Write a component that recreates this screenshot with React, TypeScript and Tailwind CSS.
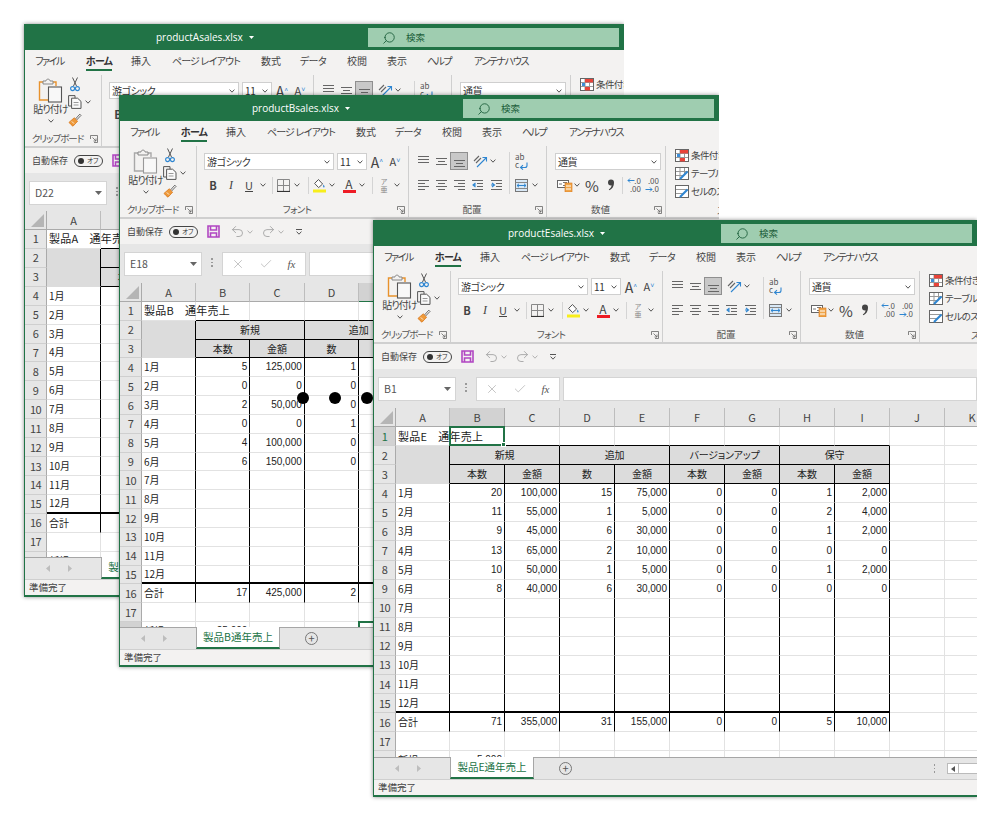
import { Check, Redo2, Search, Undo2, X } from "lucide-react";

const COLS = ["A", "B", "C", "D", "E", "F", "G", "H", "I", "J", "K"];
const MONTHS = ["1月", "2月", "3月", "4月", "5月", "6月", "7月", "8月", "9月", "10月", "11月", "12月"];
const HEAD_TOP = ["新規", "追加", "バージョンアップ", "保守"];
const HEAD_SUB = ["本数", "金額", "数", "金額", "本数", "金額", "本数", "金額"];

const TABS = [
  { label: "ファイル", cls: "w-[49px] tracking-[-1.5px]" },
  { label: "ホーム", cls: "w-[50px] tracking-[-0.7px]", active: true },
  { label: "挿入", cls: "w-[34px]" },
  { label: "ページ レイアウト", cls: "w-[96px] tracking-[-0.8px]" },
  { label: "数式", cls: "w-[34px]" },
  { label: "データ", cls: "w-[50px] tracking-[-0.5px]" },
  { label: "校閲", cls: "w-[38px]" },
  { label: "表示", cls: "w-[42px]" },
  { label: "ヘルプ", cls: "w-[42px] tracking-[-1.5px]" },
  { label: "アンテナハウス", cls: "w-[82px] tracking-[-1.4px]" },
];

type Book = {
  file: string;
  name: string;
  product: string;
  cell: string;
  pasteOn: boolean;
  windowCls: string;
  titleCls: string;
  formulaCls: string;
  gridCls: string;
  data: string[][];
  total: string[];
  extra: string;
  selCol?: number;
  selRow?: number;
};

const BOOKS: Book[] = [
  {
    file: "productAsales.xlsx",
    name: "製品A通年売上",
    product: "製品A　通年売上",
    cell: "D22",
    pasteOn: true,
    windowCls: "left-[24px] top-[24px] h-[573px] w-[600px] z-0",
    titleCls: "ml-[131px]",
    formulaCls: "h-[38px]",
    gridCls: "grid-cols-[22px_54px_repeat(10,54.4px)] auto-rows-[18.93px]",
    data: [["3", "15,000"], ["2", "10,000"], ["1", "5,000"], ["0", "0"], ["2", "10,000"], ["1", "5,000"]],
    total: ["9", "45,000"],
    extra: "5,000",
  },
  {
    file: "productBsales.xlsx",
    name: "製品B通年売上",
    product: "製品B　通年売上",
    cell: "E18",
    pasteOn: false,
    windowCls: "left-[119px] top-[95px] h-[572px] w-[600px] z-10",
    titleCls: "ml-[132px]",
    formulaCls: "h-[39px]",
    gridCls: "grid-cols-[22px_54px_repeat(10,54.4px)] auto-rows-[18.83px]",
    data: [
      ["5", "125,000", "1", "5,000"],
      ["0", "0", "0", "0"],
      ["2", "50,000", "0", "0"],
      ["0", "0", "1", "5,000"],
      ["4", "100,000", "0", "0"],
      ["6", "150,000", "0", "0"],
    ],
    total: ["17", "425,000", "2", "10,000"],
    extra: "25,000",
    selCol: 4,
    selRow: 18,
  },
  {
    file: "productEsales.xlsx",
    name: "製品E通年売上",
    product: "製品E　通年売上",
    cell: "B1",
    pasteOn: true,
    windowCls: "left-[373px] top-[220px] h-[577px] w-[604px] z-30",
    titleCls: "ml-[134px]",
    formulaCls: "h-[39px]",
    gridCls: "grid-cols-[22px_54px_repeat(10,55px)] auto-rows-[19.09px]",
    data: [
      ["20", "100,000", "15", "75,000", "0", "0", "1", "2,000"],
      ["11", "55,000", "1", "5,000", "0", "0", "2", "4,000"],
      ["9", "45,000", "6", "30,000", "0", "0", "1", "2,000"],
      ["13", "65,000", "2", "10,000", "0", "0", "0", "0"],
      ["10", "50,000", "1", "5,000", "0", "0", "1", "2,000"],
      ["8", "40,000", "6", "30,000", "0", "0", "0", "0"],
    ],
    total: ["71", "355,000", "31", "155,000", "0", "0", "5", "10,000"],
    extra: "5,000",
    selCol: 1,
    selRow: 1,
  },
];

function Caret({ cls = "" }: { cls?: string }) {
  return (
    <svg width="6" height="4" viewBox="0 0 6 4" className={`shrink-0 ${cls}`}>
      <path d="M.6.6 3 3.2 5.4.6" fill="none" stroke="#555" strokeWidth="1" />
    </svg>
  );
}

function Launcher() {
  return (
    <svg width="8" height="8" viewBox="0 0 8 8" className="shrink-0">
      <path d="M.5 4V.5H7.5V7.5H4M2.5 2.5 6 6M6 3.5V6H3.5" fill="none" stroke="#666" strokeWidth=".8" />
    </svg>
  );
}

function PasteIcon({ on }: { on: boolean }) {
  const board = on ? "#e8922c" : "#a8a8a8";
  return (
    <svg width="25" height="25" viewBox="0 0 25 25">
      <path d="M5 4H1.5V22H10" fill="none" stroke={board} strokeWidth="1.4" />
      <path d="M15 4H18V8" fill="none" stroke={board} strokeWidth="1.4" />
      <path d="M5 3H8C8 .5 12 .5 12 3H15V6H5Z" fill="#f3f2f1" stroke="#888" strokeWidth="1" />
      <rect x="10.5" y="9" width="13" height="15" fill="#f8f8f8" stroke={on ? "#555" : "#999"} strokeWidth="1.1" />
    </svg>
  );
}

function ScissorsIcon() {
  return (
    <svg width="10" height="15" viewBox="0 0 10 15">
      <path d="M2.5.5 6.5 9M7.5.5 3.5 9" fill="none" stroke="#555" strokeWidth="1" />
      <circle cx="2.6" cy="11.6" r="2" fill="none" stroke="#2f86d1" strokeWidth="1.1" />
      <circle cx="7.4" cy="11.6" r="2" fill="none" stroke="#2f86d1" strokeWidth="1.1" />
    </svg>
  );
}

function CopyIcon() {
  return (
    <svg width="14" height="14" viewBox="0 0 14 14">
      <path d="M3.5 11H.6V.6H7V3" fill="none" stroke="#555" strokeWidth="1" />
      <path d="M3.6 3.2H9.6L13 6.4V13.4H3.6Z" fill="#fafafa" stroke="#555" strokeWidth="1" />
      <path d="M5.6 7.5H10.5M5.6 10H10.5" stroke="#999" strokeWidth="1" />
    </svg>
  );
}

function BrushIcon() {
  return (
    <svg width="14" height="14" viewBox="0 0 14 14">
      <path d="M7.5 6 11.8 1.2 13 2.4 8.6 7" fill="#fff" stroke="#555" strokeWidth=".9" />
      <path d="M1 9.4 6.2 4.8 9.6 8.2 5 13.2C3.6 12 2 10.8 1 9.4Z" fill="#ee9a3a" stroke="#d9761a" strokeWidth=".8" />
      <path d="M3.8 8.4 6 10.6" stroke="#fff" strokeWidth=".8" />
    </svg>
  );
}

function BordersIcon() {
  return (
    <svg width="13" height="13" viewBox="0 0 13 13">
      <path d="M.5.5H12.5V12.5H.5ZM6.5.5V12.5M.5 6.5H12.5" fill="none" stroke="#888" strokeWidth="1" />
      <path d="M0 12.5H13" stroke="#333" strokeWidth="1.2" />
    </svg>
  );
}

function FillIcon() {
  return (
    <svg width="13" height="15" viewBox="0 0 13 15">
      <path d="M5.5 1.5 9.6 6 5.6 9.6 1.6 5.4Z" fill="#fff" stroke="#555" strokeWidth="1" />
      <path d="M10.5 6.5C11.5 8 12 8.5 11.2 9.4 10.4 9.8 9.6 9 10.5 6.5Z" fill="#2f86d1" />
      <rect y="11.5" width="13" height="3" fill="#f7ee1c" />
    </svg>
  );
}

function FontColorIcon() {
  return (
    <div className="flex w-[13px] flex-col items-center leading-none">
      <span className="h-[11px] text-[12px] leading-[11px] text-[#444]">A</span>
      <span className="mt-[1px] h-[3px] w-[13px] bg-[#ee1c25]" />
    </div>
  );
}

function AlignIcon({ kind }: { kind: string }) {
  const paths: Record<string, string> = {
    top: "M1 1.5H12M1 4.5H12M1 7.5H12",
    middle: "M1 3.5H12M3 6.5H10M1 9.5H12",
    bottom: "M1 5.5H12M3 8.5H10M1 11.5H12",
    left: "M1 1.5H12M1 4.5H8M1 7.5H12M1 10.5H8",
    center: "M1 1.5H12M3 4.5H10M1 7.5H12M3 10.5H10",
    right: "M1 1.5H12M5 4.5H12M1 7.5H12M5 10.5H12",
    outdent: "M1 1.5H12M6 4.5H12M6 7.5H12M1 10.5H12",
    indent: "M1 1.5H12M6 4.5H12M6 7.5H12M1 10.5H12",
  };
  return (
    <svg width="13" height="13" viewBox="0 0 13 13">
      <path d={paths[kind]} fill="none" stroke="#666" strokeWidth="1" />
      {kind === "outdent" && <path d="M4.5 4 2 6l2.5 2M2 6H5" fill="none" stroke="#2f86d1" strokeWidth="1.1" />}
      {kind === "indent" && <path d="M2 4l2.5 2L2 8M4.5 6H1" fill="none" stroke="#2f86d1" strokeWidth="1.1" />}
    </svg>
  );
}

function OrientIcon() {
  return (
    <svg width="15" height="13" viewBox="0 0 15 13">
      <path d="M1 6 6 1M3 8 8 3" fill="none" stroke="#666" strokeWidth="1.1" />
      <path d="M4 12 13 3M9.5 2.5H13.5V6.5" fill="none" stroke="#2f86d1" strokeWidth="1.1" />
    </svg>
  );
}

function WrapIcon() {
  return (
    <div className="relative flex h-[17px] w-[13px] flex-col text-[8px] leading-[8px] text-[#555]">
      <span>ab</span>
      <span>c</span>
      <svg width="9" height="8" viewBox="0 0 9 8" className="absolute right-0 bottom-0">
        <path d="M8 .5V3.5C8 5 7 5.5 6 5.5H2M4 3.2 1.5 5.5 4 7.6" fill="none" stroke="#2f86d1" strokeWidth="1.1" />
      </svg>
    </div>
  );
}

function MergeIcon() {
  return (
    <svg width="13" height="13" viewBox="0 0 13 13">
      <rect x=".5" y=".5" width="12" height="12" fill="#d8e8f6" stroke="#777" />
      <path d="M.5 3.5H12.5M.5 9.5H12.5" stroke="#888" />
      <path d="M2 6.5H11M4 4.8 2 6.5 4 8.2M9 4.8 11 6.5 9 8.2" fill="none" stroke="#2f86d1" strokeWidth="1" />
    </svg>
  );
}

function CurrencyIcon() {
  return (
    <svg width="16" height="13" viewBox="0 0 16 13">
      <rect x=".5" y="1.5" width="11" height="7" fill="#fff" stroke="#666" />
      <path d="M2 5H5M6 3.5H10M6 6.5H10" stroke="#777" />
      <rect x="8" y="4" width="7" height="9" fill="#f0a64b" stroke="#d9761a" strokeWidth=".6" />
      <path d="M9 7H14M9 10H14" stroke="#fff" />
    </svg>
  );
}

function CommaIcon() {
  return (
    <svg width="8" height="12" viewBox="0 0 8 12">
      <circle cx="4" cy="3.6" r="3" fill="#444" />
      <path d="M6.8 4C7 7.4 5.2 10 2.4 11.2L1.8 10.4C3.6 9.2 4.6 7.8 4.6 6Z" fill="#444" />
    </svg>
  );
}

function DecimalIcon({ up }: { up: boolean }) {
  return (
    <div className="relative h-[16px] w-[14px] text-[8px] leading-[8px] text-[#555]">
      <span className="absolute top-0 right-0">{up ? ".0" : ".00"}</span>
      <span className="absolute right-0 bottom-0">{up ? ".00" : ".0"}</span>
      <svg width="8" height="5" viewBox="0 0 8 5" className={up ? "absolute top-[1px] left-0" : "absolute bottom-[1px] left-0"}>
        {up ? (
          <path d="M7.5 2.5H1M3 .5 1 2.5 3 4.5" fill="none" stroke="#2f86d1" strokeWidth="1" />
        ) : (
          <path d="M.5 2.5H7M5 .5 7 2.5 5 4.5" fill="none" stroke="#2f86d1" strokeWidth="1" />
        )}
      </svg>
    </div>
  );
}

function StyleIcon({ kind }: { kind: number }) {
  return (
    <svg width="14" height="13" viewBox="0 0 14 13" className="shrink-0">
      <rect x=".5" y=".5" width="13" height="12" fill="#fff" stroke="#666" />
      {kind === 0 && (
        <>
          <path d="M1 4.5H13M1 8.5H13M5 1V12M9.5 1V12" stroke="#999" />
          <rect x="5" y="1" width="8" height="3.4" fill="#e8443a" />
          <rect x="2" y="5" width="3" height="3" fill="#3b8ed8" />
          <rect x="5" y="9" width="5" height="3.4" fill="#e8443a" />
        </>
      )}
      {kind === 1 && <path d="M1 4.5H13M1 8.5H9M5 1V12M9.5 1V8" stroke="#999" />}
      {kind === 2 && <path d="M1 4.5H13M1 8.5H8" stroke="#999" />}
      {kind !== 0 && <path d="M5 12 12.5 4.5" stroke="#2f86d1" strokeWidth="2.2" />}
    </svg>
  );
}

function Combo({ text, cls }: { text: string; cls: string }) {
  return (
    <div className={`flex h-[17px] items-center justify-between border border-[#cfcfcf] bg-white pr-[3px] pl-[2px] text-[10px] tracking-[-0.4px] text-[#333] ${cls}`}>
      <span className="whitespace-nowrap">{text}</span>
      <Caret />
    </div>
  );
}

function Slot({ cls, children }: { cls: string; children: React.ReactNode }) {
  return <div className={`flex shrink-0 items-center justify-center ${cls}`}>{children}</div>;
}

function Divider({ cls }: { cls: string }) {
  return <div className={`h-[17px] w-px shrink-0 bg-[#d4d4d4] ${cls}`} />;
}

function GroupLabel({ text, cls = "" }: { text: string; cls?: string }) {
  return (
    <div className="flex h-[14px] shrink-0 items-center pr-[3px]">
      <span className={`flex-1 whitespace-nowrap text-center text-[9.5px] leading-none text-[#555] ${cls}`}>{text}</span>
      <Launcher />
    </div>
  );
}

function Ribbon({ pasteOn }: { pasteOn: boolean }) {
  return (
    <div className="flex h-[71px] shrink-0 bg-[#f3f2f1]">
      <div className="flex w-[77px] shrink-0 flex-col border-r border-[#cfcfcf]">
        <div className="flex flex-1">
          <div className="flex w-[47px] shrink-0 flex-col items-center pt-[3px] pl-[4px]">
            <PasteIcon on={pasteOn} />
            <span className="whitespace-nowrap text-[10px] leading-[12px] tracking-[-0.9px] text-[#444]">貼り付け</span>
            <Caret cls="mt-[4px]" />
          </div>
          <div className="ml-[-4px] flex flex-col">
            <Slot cls="h-[18px] w-[14px]"><ScissorsIcon /></Slot>
            <div className="flex h-[18px] items-center gap-[3px]"><CopyIcon /><Caret /></div>
            <Slot cls="h-[18px] w-[14px]"><BrushIcon /></Slot>
          </div>
        </div>
        <GroupLabel text="クリップボード" cls="tracking-[-1px]" />
      </div>

      <div className="flex w-[212px] shrink-0 flex-col border-r border-[#cfcfcf] pt-[7px]">
        <div className="flex flex-1 flex-col">
          <div className="flex items-center pl-[7px]">
            <Combo text="游ゴシック" cls="w-[130px]" />
            <Combo text="11" cls="ml-[3px] w-[30px]" />
            <Slot cls="ml-[1px] w-[18px]"><span className="text-[14px] leading-none text-[#444]">A<sup className="text-[7px] text-[#2f86d1]">^</sup></span></Slot>
            <Slot cls="w-[18px]"><span className="text-[11px] leading-none text-[#444]">A<sup className="text-[7px] text-[#2f86d1]">˅</sup></span></Slot>
          </div>
          <div className="mt-[6px] flex h-[18px] items-center pl-[7px] text-[#444]">
            <Slot cls="w-[18px]"><span className="text-[11px] font-bold">B</span></Slot>
            <Slot cls="w-[18px]"><span className="font-['Liberation_Serif'] text-[12px] italic">I</span></Slot>
            <Slot cls="w-[18px]"><span className="text-[11px] underline">U</span></Slot>
            <Slot cls="w-[9px]"><Caret /></Slot>
            <Divider cls="ml-[5px]" />
            <Slot cls="ml-[2px] w-[16px]"><BordersIcon /></Slot>
            <Slot cls="w-[12px]"><Caret /></Slot>
            <Divider cls="ml-[5px]" />
            <Slot cls="ml-[2px] w-[16px]"><FillIcon /></Slot>
            <Slot cls="w-[10px]"><Caret /></Slot>
            <Slot cls="ml-[4px] w-[16px]"><FontColorIcon /></Slot>
            <Slot cls="w-[10px]"><Caret /></Slot>
            <Divider cls="ml-[5px]" />
            <Slot cls="ml-[3px] w-[16px]"><span className="flex flex-col items-center text-[7px] leading-[8px] text-[#888]"><span>ア</span><span>亜</span></span></Slot>
            <Slot cls="w-[10px]"><Caret /></Slot>
          </div>
        </div>
        <GroupLabel text="フォント" cls="tracking-[-0.6px]" />
      </div>

      <div className="flex w-[138px] shrink-0 flex-col border-r border-[#cfcfcf] pt-[6px]">
        <div className="flex flex-1">
          <div className="w-[100px] shrink-0 pl-[5px]">
            <div className="flex h-[18px] items-center">
              <Slot cls="w-[18px]"><AlignIcon kind="top" /></Slot>
              <Slot cls="w-[18px]"><AlignIcon kind="middle" /></Slot>
              <Slot cls="h-[18px] w-[18px] border border-[#8f8f8f] bg-[#c8c8c8]"><AlignIcon kind="bottom" /></Slot>
              <Slot cls="ml-[5px] w-[15px]"><OrientIcon /></Slot>
              <Slot cls="w-[10px]"><Caret /></Slot>
            </div>
            <div className="mt-[6px] flex h-[18px] items-center">
              <Slot cls="w-[18px]"><AlignIcon kind="left" /></Slot>
              <Slot cls="w-[18px]"><AlignIcon kind="center" /></Slot>
              <Slot cls="w-[18px]"><AlignIcon kind="right" /></Slot>
              <Slot cls="w-[19px]"><AlignIcon kind="outdent" /></Slot>
              <Slot cls="w-[19px]"><AlignIcon kind="indent" /></Slot>
            </div>
          </div>
          <div className="h-[42px] w-px shrink-0 bg-[#d4d4d4]" />
          <div className="pl-[5px]">
            <div className="flex h-[18px] items-center"><WrapIcon /></div>
            <div className="mt-[6px] flex h-[18px] items-center gap-[4px]"><MergeIcon /><Caret /></div>
          </div>
        </div>
        <GroupLabel text="配置" />
      </div>

      <div className="flex w-[119px] shrink-0 flex-col border-r border-[#cfcfcf] pt-[7px]">
        <div className="flex flex-1 flex-col">
          <div className="pl-[8px]"><Combo text="通貨" cls="w-[106px]" /></div>
          <div className="mt-[6px] flex h-[18px] items-center pl-[10px] text-[#444]">
            <Slot cls="w-[16px]"><CurrencyIcon /></Slot>
            <Slot cls="ml-[1px] w-[6px]"><Caret /></Slot>
            <Slot cls="ml-[2px] w-[20px]"><span className="text-[15px] leading-none">%</span></Slot>
            <Slot cls="w-[18px]"><CommaIcon /></Slot>
            <Divider cls="ml-[2px]" />
            <Slot cls="ml-[2px] w-[18px]"><DecimalIcon up /></Slot>
            <Slot cls="w-[18px]"><DecimalIcon up={false} /></Slot>
          </div>
        </div>
        <GroupLabel text="数値" />
      </div>

      <div className="flex min-w-0 flex-1 flex-col pl-[9px]">
        <div className="flex flex-1 flex-col text-[9.5px] tracking-[-0.6px] text-[#444]">
          <div className="flex h-[18px] items-center gap-[2px] whitespace-nowrap"><StyleIcon kind={0} />条件付き書式</div>
          <div className="flex h-[18px] items-center gap-[2px] whitespace-nowrap"><StyleIcon kind={1} />テーブルとして書式設定</div>
          <div className="flex h-[18px] items-center gap-[2px] whitespace-nowrap"><StyleIcon kind={2} />セルのスタイル</div>
        </div>
        <div className="h-[14px] pl-[42px] text-[9.5px] leading-[14px] whitespace-nowrap text-[#555]">スタイル</div>
      </div>
    </div>
  );
}

function QuickBar() {
  return (
    <div className="flex h-[25px] shrink-0 items-center bg-[#f3f2f1] pl-[7px] text-[#777]">
      <span className="text-[9px] text-[#444]">自動保存</span>
      <div className="ml-[6px] flex h-[12px] w-[29px] items-center gap-[3px] rounded-full border border-[#444] pl-[3px]">
        <span className="size-[6px] rounded-full bg-[#333]" />
        <span className="text-[6.5px] leading-none text-[#333]">オフ</span>
      </div>
      <svg width="13" height="13" viewBox="0 0 13 13" className="ml-[9px]">
        <path d="M1 1H12V12H1ZM3.5 1V5H9.5V1M3.5 12V8H9.5V12" fill="none" stroke="#b146c2" strokeWidth="1.6" />
      </svg>
      <Undo2 size={15} strokeWidth={1.5} className="ml-[10px] text-[#a6a6a6]" />
      <Caret cls="ml-[2px] opacity-40" />
      <Redo2 size={15} strokeWidth={1.5} className="ml-[8px] text-[#a6a6a6]" />
      <Caret cls="ml-[2px] opacity-40" />
      <div className="ml-[12px] flex flex-col items-center gap-[1px]">
        <span className="h-px w-[6px] bg-[#555]" />
        <Caret />
      </div>
    </div>
  );
}

function FormulaBar({ cell, cls }: { cell: string; cls: string }) {
  return (
    <div className={`flex shrink-0 items-start bg-[#e6e6e6] pt-[8px] pl-[4px] ${cls}`}>
      <div className="flex h-[24px] w-[78px] shrink-0 items-center justify-between border border-[#d4d4d4] bg-white pr-[4px] pl-[5px] text-[10.5px] text-[#555]">
        {cell}
        <svg width="7" height="4" viewBox="0 0 7 4"><path d="M0 0H7L3.5 4Z" fill="#666" /></svg>
      </div>
      <div className="mx-[9px] mt-[6px] flex flex-col gap-[2px]">
        <span className="size-[1.5px] bg-[#999]" />
        <span className="size-[1.5px] bg-[#999]" />
        <span className="size-[1.5px] bg-[#999]" />
      </div>
      <div className="flex h-[24px] w-[84px] shrink-0 items-center border border-[#d4d4d4] bg-white">
        <Slot cls="w-[30px]"><X size={14} strokeWidth={1.5} className="text-[#bdbdbd]" /></Slot>
        <Slot cls="w-[26px]"><Check size={14} strokeWidth={1.5} className="text-[#bdbdbd]" /></Slot>
        <Slot cls="w-[26px]"><span className="font-['Liberation_Serif'] text-[11px] italic text-[#555]">fx</span></Slot>
      </div>
      <div className="ml-[3px] h-[24px] flex-1 border border-[#d4d4d4] bg-white" />
    </div>
  );
}

function cellBorder(col: number, row: number) {
  // col: 0 = A ... 8 = I. Table runs from B2 to I16
  const inTable = col >= 1 && col <= 8 && row >= 2 && row <= 16;
  const parts = ["border-r border-b border-[#e2e2e2]"];
  if (inTable || (col === 0 && row >= 2 && row <= 16)) parts.push("border-r-black");
  if (inTable && row <= 3) parts.push("border-b-black bg-[#dcdcdc]");
  if (row === 1 && col >= 1 && col <= 8) parts.push("border-b-black");
  if (row === 15 && col <= 8) parts.push("border-b-2 border-b-black");
  return parts.join(" ");
}

function RowHeader({ n, selected }: { n: number; selected: boolean }) {
  return (
    <div
      className={`flex items-center justify-center border-r border-b border-r-[#aaa] border-b-[#cfcfcf] text-[11px] leading-none tracking-[-0.5px] ${
        selected ? "border-r-[#217346] bg-[#d2d2d2] text-[#217346]" : "bg-[#e6e6e6] text-[#444]"
      }`}
    >
      {n}
    </div>
  );
}

function TextCell({ col, row, text, num }: { col: number; row: number; text?: string; num?: boolean }) {
  return (
    <div
      className={`flex items-center overflow-hidden whitespace-nowrap text-[10px] leading-none text-[#222] ${
        num ? "justify-end pr-[2px] font-['Liberation_Sans']" : "pl-[2px]"
      } ${cellBorder(col, row)}`}
    >
      {text}
    </div>
  );
}

function Sheet({ book }: { book: Book }) {
  const filler = (row: number, from: number) =>
    COLS.slice(from).map((_, i) => <TextCell key={`${row}-${from + i}`} col={from + i} row={row} />);

  const row1Cells = COLS.map((_, col) => {
    const selected = book.selRow === 1 && book.selCol === col;
    return (
      <div key={col} className={`relative flex items-center whitespace-nowrap ${cellBorder(col, 1)}`}>
        {col === 0 && (
          <span className="absolute left-[2px] z-10 text-[11px] leading-none tracking-[0.2px] text-[#222]">{book.product}</span>
        )}
        {selected && (
          <div className="absolute -top-px -left-px z-20 h-[calc(100%+2px)] w-[calc(100%+2px)] border-2 border-[#217346]">
            <span className="absolute -right-[3px] -bottom-[3px] size-[5px] border border-white bg-[#217346]" />
          </div>
        )}
      </div>
    );
  });

  return (
    <div className="min-h-0 flex-1 overflow-hidden bg-white">
      <div className={`grid grid-rows-[19px] ${book.gridCls}`}>
        <div className="flex items-end justify-end border-r border-b border-[#aaa] bg-[#e6e6e6] pr-[2px] pb-[2px]">
          <svg width="13" height="13" viewBox="0 0 13 13"><path d="M13 0V13H0Z" fill="#b5b5b5" /></svg>
        </div>
        {COLS.map((c, i) => (
          <div
            key={c}
            className={`flex items-center justify-center border-r border-b text-[11px] leading-none text-[#444] ${
              book.selCol === i ? "border-r-[#aaa] border-b-[#217346] bg-[#d2d2d2]" : "border-r-[#bdbdbd] border-b-[#aaa] bg-[#e6e6e6]"
            }`}
          >
            {c}
          </div>
        ))}

        <RowHeader n={1} selected={book.selRow === 1} />
        {row1Cells}

        <RowHeader n={2} selected={false} />
        <div className="row-span-2 border-r border-b border-r-black border-b-[#dcdcdc] bg-[#dcdcdc]" />
        {HEAD_TOP.map((t) => (
          <div key={t} className={`col-span-2 flex items-center justify-center text-[10px] leading-none tracking-[-0.2px] text-[#222] ${cellBorder(2, 2)}`}>
            {t}
          </div>
        ))}
        {filler(2, 9)}

        <RowHeader n={3} selected={false} />
        {HEAD_SUB.map((t, i) => (
          <div key={i} className={`flex items-center justify-center text-[10px] leading-none text-[#222] ${cellBorder(2, 3)}`}>
            {t}
          </div>
        ))}
        {filler(3, 9)}

        {MONTHS.map((m, r) => {
          const row = r + 4;
          const vals = book.data[r] ?? [];
          return (
            <div key={m} className="contents">
              <RowHeader n={row} selected={false} />
              <TextCell col={0} row={row} text={m} />
              {COLS.slice(1).map((_, c) => (
                <TextCell key={c} col={c + 1} row={row} text={vals[c]} num />
              ))}
            </div>
          );
        })}

        <RowHeader n={16} selected={false} />
        <TextCell col={0} row={16} text="合計" />
        {COLS.slice(1).map((_, c) => (
          <TextCell key={c} col={c + 1} row={16} text={book.total[c]} num />
        ))}

        <RowHeader n={17} selected={false} />
        {filler(17, 0)}

        <RowHeader n={18} selected={book.selRow === 18} />
        <TextCell col={0} row={18} text="新規" />
        <TextCell col={1} row={18} text={book.extra} num />
        {COLS.slice(2).map((_, c) => (
          <div key={c} className={`relative ${cellBorder(c + 2, 18)}`}>
            {book.selRow === 18 && book.selCol === c + 2 && <div className="absolute -top-px -left-px h-[calc(100%+2px)] w-[calc(100%+2px)] border-2 border-[#217346]" />}
          </div>
        ))}
      </div>
    </div>
  );
}

function SheetTabs({ name }: { name: string }) {
  return (
    <div className="flex h-[22px] shrink-0 items-stretch border-t border-[#a6a6a6] bg-[#e6e6e6]">
      <div className="flex w-[76px] shrink-0 items-center justify-start gap-[18px] pl-[21px]">
        <svg width="4" height="7" viewBox="0 0 4 7"><path d="M4 0V7L0 3.5Z" fill="#bdbdbd" /></svg>
        <svg width="4" height="7" viewBox="0 0 4 7"><path d="M0 0V7L4 3.5Z" fill="#bdbdbd" /></svg>
      </div>
      <div className="-mt-px flex w-[84px] shrink-0 items-center justify-center border-x border-b-2 border-x-[#a6a6a6] border-b-[#217346] bg-white text-[10.5px] text-[#217346]">
        {name}
      </div>
      <div className="ml-[25px] flex items-center">
        <div className="flex size-[13px] items-center justify-center rounded-full border border-[#777] text-[11px] leading-none text-[#555]">+</div>
      </div>
      <div className="flex-1" />
      <div className="flex items-center gap-[2px]">
        <div className="flex flex-col gap-[2px]">
          <span className="size-[1.5px] bg-[#999]" />
          <span className="size-[1.5px] bg-[#999]" />
          <span className="size-[1.5px] bg-[#999]" />
        </div>
        <div className="ml-[10px] flex h-[11px] w-[30px] border-y border-l border-[#bbb] bg-white">
          <div className="flex w-[11px] items-center justify-center border-r border-[#bbb]">
            <svg width="4" height="6" viewBox="0 0 4 6"><path d="M4 0V6L0 3Z" fill="#555" /></svg>
          </div>
        </div>
      </div>
    </div>
  );
}

function ExcelWindow({ book }: { book: Book }) {
  return (
    <div className={`absolute flex flex-col overflow-hidden border-t border-b-2 border-l border-[#217346] bg-[#f3f2f1] shadow-[0_0_4px_rgba(0,0,0,0.45)] [clip-path:inset(-6px_0_-6px_-6px)] ${book.windowCls}`}>
      <div className="flex h-[25px] shrink-0 items-center bg-[#217346] text-white">
        <span className={`font-['Open_Sans'] text-[10px] ${book.titleCls}`}>{book.file}</span>
        <svg width="5" height="3" viewBox="0 0 5 3" className="ml-[6px]"><path d="M0 0H5L2.5 3Z" fill="#fff" /></svg>
        <div className="mr-[5px] ml-auto flex h-[19px] w-[251px] shrink-0 items-center bg-[#9fcdb0] pl-[14px] text-[#1c5e3a]">
          <Search size={14} strokeWidth={1.5} className="-scale-x-100" />
          <span className="ml-[10px] text-[9.5px] leading-none">検索</span>
        </div>
      </div>
      <div className="flex h-[25px] shrink-0 items-start bg-[#f3f2f1]">
        {TABS.map((t) => (
          <div key={t.label} className={`flex h-[21px] shrink-0 items-center justify-center whitespace-nowrap text-[10px] text-[#444] ${t.cls}`}>
            <span className={t.active ? "flex h-full items-center border-b-2 border-[#217346] pt-[2px] font-bold text-[#333]" : ""}>{t.label}</span>
          </div>
        ))}
      </div>
      <Ribbon pasteOn={book.pasteOn} />
      <div className="h-[2px] shrink-0 bg-[#cfcfcf]" />
      <QuickBar />
      <FormulaBar cell={book.cell} cls={book.formulaCls} />
      <Sheet book={book} />
      <SheetTabs name={book.name} />
      <div className="flex h-[16px] shrink-0 items-center border-t border-[#cfcfcf] bg-[#f3f2f1] pl-[4px] text-[9.5px] leading-none text-[#444]">準備完了</div>
    </div>
  );
}

export default function App() {
  return (
    <div className="relative h-[814px] w-[1000px] overflow-hidden bg-white font-['Noto_Sans_CJK_JP','Liberation_Sans',sans-serif] [font-feature-settings:'palt']">
      <ExcelWindow book={BOOKS[0]} />
      <ExcelWindow book={BOOKS[1]} />
      <div className="absolute top-[392px] left-[297px] z-20 flex gap-[20px]">
        <span className="size-[12px] rounded-full bg-black" />
        <span className="size-[12px] rounded-full bg-black" />
        <span className="size-[12px] rounded-full bg-black" />
      </div>
      <ExcelWindow book={BOOKS[2]} />
    </div>
  );
}
